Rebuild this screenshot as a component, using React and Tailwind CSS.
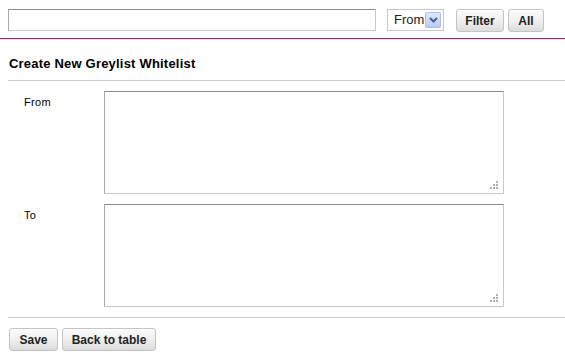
const Btn = ({ children, className = '' }) => (
  <button
    className={`h-[23px] rounded-[3px] border border-[#c4c4c4] bg-gradient-to-b from-[#fbfbfb] via-[#f0f0f0] to-[#dcdcdc] text-[12px] font-bold text-[#222] shadow-[inset_0_1px_0_#fff] ${className}`}
  >
    {children}
  </button>
);

const Grip = () => (
  <svg className="absolute right-[6px] bottom-[5px]" width="9" height="9" viewBox="0 0 9 9">
    <rect x="7" y="1" width="2" height="2" fill="#b0b0b0" />
    <rect x="4" y="4" width="2" height="2" fill="#b0b0b0" />
    <rect x="7" y="4" width="2" height="2" fill="#b0b0b0" />
    <rect x="1" y="7" width="2" height="2" fill="#b0b0b0" />
    <rect x="4" y="7" width="2" height="2" fill="#b0b0b0" />
    <rect x="7" y="7" width="2" height="2" fill="#b0b0b0" />
  </svg>
);

const Field = ({ label }) => (
  <div className="flex">
    <div className="w-[104px] pl-[24px] pt-[4px] text-[11px] leading-[14px] text-black tracking-[0.3px]">{label}</div>
    <div className="relative">
      <textarea className="block w-[400px] h-[103px] resize-none border border-[#c8c8c8] border-t-[#8a8a8a] border-l-[#a8a8a8] bg-white outline-none" />
      <Grip />
    </div>
  </div>
);

export default function App() {
  return (
    <div className="w-[565px] h-[356px] bg-white font-['Liberation_Sans',Arial,sans-serif] overflow-hidden">
      {/* search bar */}
      <div className="h-[38px] flex items-start pt-[9px] pl-[8px]">
        <input className="w-[368px] h-[22px] border border-[#c8c8c8] border-t-[#8a8a8a] border-l-[#a8a8a8] outline-none" />
        <div className="ml-[11px] w-[57px] h-[22px] border border-[#c8c8c8] flex items-center justify-between pl-[6px] pr-[2px]">
          <span className="text-[13px] text-[#222]">From</span>
          <span className="w-[16px] h-[16px] rounded-[2px] border border-[#a9c1ee] bg-gradient-to-b from-[#dfe9fc] to-[#b8cdf5] flex items-center justify-center">
            <svg width="9" height="6" viewBox="0 0 9 6">
              <path d="M1 1l3.5 3.5L8 1" fill="none" stroke="#4d6185" strokeWidth="2" />
            </svg>
          </span>
        </div>
        <Btn className="ml-[12px] w-[48px]">Filter</Btn>
        <Btn className="ml-[4px] w-[36px]">All</Btn>
      </div>
      <div className="h-[1px] bg-[#9a2f78]" />
      <div className="h-[1px] bg-[#f4dcec]" />

      <div className="pl-[9px] pt-[16px] h-[40px] text-[13px] leading-[15px] font-bold text-black tracking-[0.2px]">Create New Greylist Whitelist</div>
      <div className="ml-[8px] h-[1px] bg-[#cccccc]" />

      <div className="pt-[10px] flex flex-col gap-[10px]">
        <Field label="From" />
        <Field label="To" />
      </div>

      <div className="ml-[8px] mt-[10px] h-[1px] bg-[#cccccc]" />
      <div className="flex gap-[4px] pl-[9px] pt-[10px]">
        <Btn className="w-[49px]">Save</Btn>
        <Btn className="w-[94px]">Back to table</Btn>
      </div>
    </div>
  );
}
